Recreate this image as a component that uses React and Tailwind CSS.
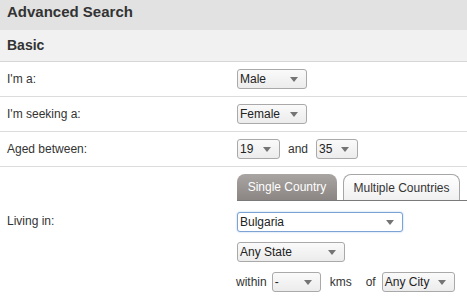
function Arrow() {
    return (
        <svg width="8" height="5" viewBox="0 0 8 5" className="shrink-0">
            <path d="M0 0 L8 0 L4 5 Z" fill="#747474" />
        </svg>
    )
}

function Select({ value, w, focus }) {
    return (
        <div
            className={`flex h-[20px] items-center justify-between rounded-[3px] border pl-[2px] pr-[8px] text-[12px] text-[#222] ${
                focus
                    ? "border-[#7da2d4] bg-white shadow-[0_0_2px_#a8c4ea]"
                    : "border-[#a9a9a9] bg-gradient-to-b from-[#fafafa] to-[#ececec]"
            } ${w}`}
        >
            <span>{value}</span>
            <Arrow />
        </div>
    )
}

function Row({ label, children }) {
    return (
        <div className="flex h-[35px] items-center border-b border-[#dcdcdc]">
            <div className="w-[237px] pl-[7px] text-[12px] text-[#333]">{label}</div>
            <div className="flex items-center">{children}</div>
        </div>
    )
}

export default function App() {
    return (
        <div className="h-[298px] w-[467px] overflow-hidden bg-white font-['Liberation_Sans',Arial,sans-serif]">
            <div className="h-[30px] bg-[#e2e2e2] pl-[7px] pt-[3px] text-[15px] leading-[18px] font-bold text-[#333]">
                Advanced Search
            </div>
            <div className="flex h-[32px] items-center border-b border-[#d6d6d6] bg-[#f1f1f1] pl-[7px] text-[14px] font-bold text-[#333]">
                Basic
            </div>
            <Row label="I'm a:">
                <Select value="Male" w="w-[70px]" />
            </Row>
            <Row label="I'm seeking a:">
                <Select value="Female" w="w-[70px]" />
            </Row>
            <Row label="Aged between:">
                <Select value="19" w="w-[43px]" />
                <span className="mx-[8px] text-[12px] text-[#333]">and</span>
                <Select value="35" w="w-[42px]" />
            </Row>
            <div className="flex">
                <div className="w-[237px] pl-[7px] pt-[45px] text-[12px] text-[#333]">Living in:</div>
                <div className="flex-1 pt-[7px]">
                    <div className="flex items-end gap-[6px] border-b border-[#7a7a7a]">
                        <div className="flex h-[26px] w-[100px] items-center justify-center rounded-t-[8px] bg-gradient-to-b from-[#a9a5a2] to-[#8b8683] text-[12px] text-white">
                            Single Country
                        </div>
                        <div className="flex h-[26px] w-[117px] items-center justify-center rounded-t-[8px] border border-b-0 border-[#a6a6a6] bg-gradient-to-b from-white to-[#f0f0f0] text-[12px] text-[#333]">
                            Multiple Countries
                        </div>
                    </div>
                    <div className="mt-[11px]">
                        <Select value="Bulgaria" w="w-[166px]" focus />
                    </div>
                    <div className="mt-[10px]">
                        <Select value="Any State" w="w-[108px]" />
                    </div>
                    <div className="mt-[10px] flex items-center text-[12px] text-[#333]">
                        <span className="mr-[5px] -ml-[1px]">within</span>
                        <Select value="-" w="w-[49px]" />
                        <span className="ml-[9px] mr-[14px]">kms</span>
                        <span className="mr-[6px]">of</span>
                        <Select value="Any City" w="w-[73px]" />
                    </div>
                </div>
            </div>
        </div>
    )
}
